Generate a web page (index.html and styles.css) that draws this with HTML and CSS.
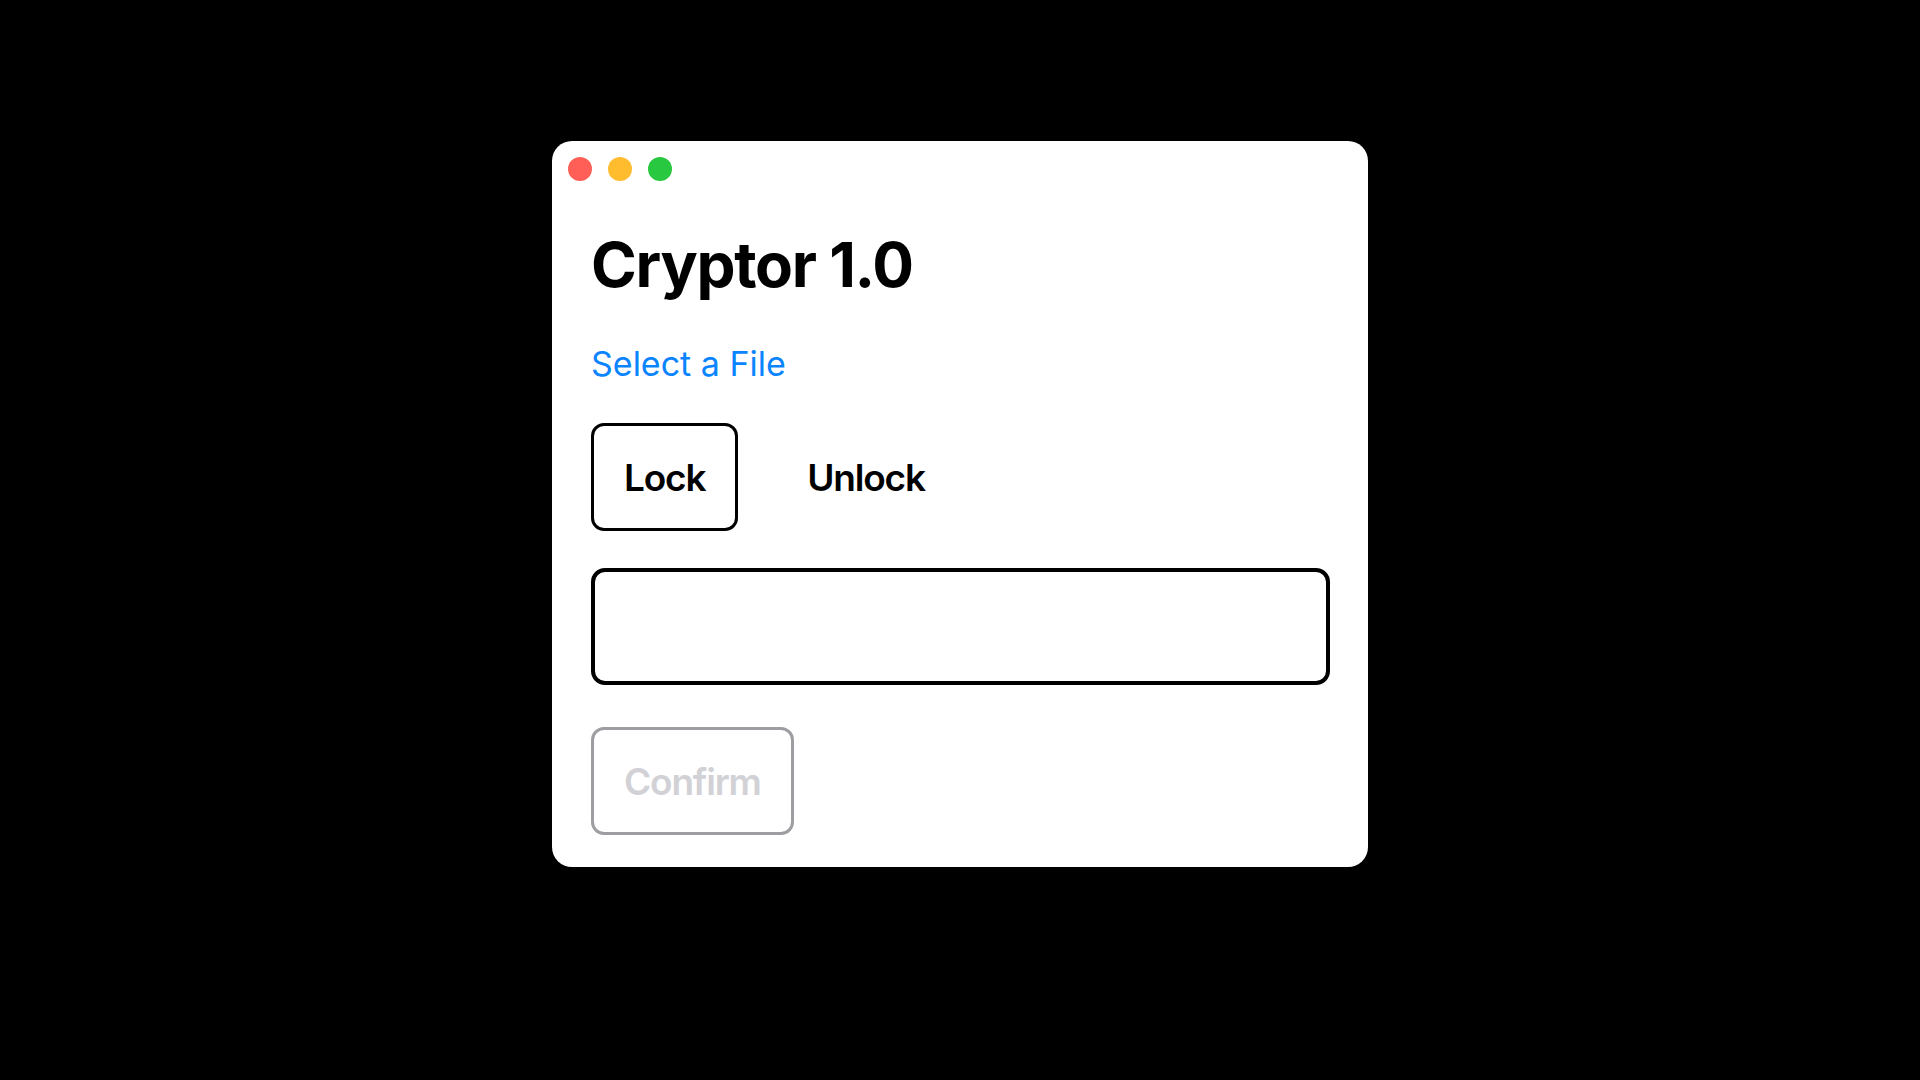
FILE: index.html
```html
<!DOCTYPE html>
<html lang="en">
<head>
<meta charset="utf-8">
<title>Cryptor 1.0</title>
<link rel="stylesheet" href="styles.css">
</head>
<body>
  <div class="window">
    <div class="titlebar">
      <span class="light red"></span>
      <span class="light yellow"></span>
      <span class="light green"></span>
    </div>
    <div class="content">
      <h1 class="title">Cryptor 1.0</h1>
      <a class="select-link" href="#">Select a File</a>
      <div class="modes">
        <button class="mode active">Lock</button>
        <button class="mode">Unlock</button>
      </div>
      <input class="key-input" type="text">
      <div class="actions">
        <button class="confirm" disabled>Confirm</button>
      </div>
    </div>
  </div>
</body>
</html>
```
FILE: styles.css
```css
html, body {
  margin: 0;
  padding: 0;
  background: #000;
  height: 100%;
}
body {
  font-family: Inter, "Noto Sans", "Liberation Sans", sans-serif;
  padding-top: 141px;
  box-sizing: border-box;
}
.window {
  width: 816px;
  margin: 0 auto;
  background: #fff;
  border-radius: 20px;
  box-sizing: border-box;
  padding: 16px 38px 32px 39px;
}
.titlebar {
  display: flex;
  gap: 16px;
  margin-left: -23px;
  height: 24px;
}
.light {
  width: 24px;
  height: 24px;
  border-radius: 50%;
  display: block;
}
.red { background: #ff5f57; }
.yellow { background: #febc2e; }
.green { background: #28c840; }
.content {
  display: flex;
  flex-direction: column;
  align-items: flex-start;
}
.title {
  margin: 53px 0 0 0;
  font-size: 62px;
  line-height: 62px;
  font-weight: 700;
  color: #000;
  letter-spacing: -1.3px;
}
.select-link {
  margin-top: 51px;
  font-size: 34px;
  line-height: 34px;
  color: #0a84ff;
  text-decoration: none;
}
.modes {
  margin-top: 42px;
  display: flex;
  gap: 36px;
}
.mode {
  height: 108px;
  padding: 0 30px;
  border: 3px solid transparent;
  border-radius: 13px;
  background: #fff;
  font-family: inherit;
  font-size: 37px;
  font-weight: 600;
  color: #000;
  letter-spacing: -1.2px;
}
.mode.active {
  border-color: #000;
}
.key-input {
  margin-top: 37px;
  width: 100%;
  height: 117px;
  box-sizing: border-box;
  border: 4px solid #000;
  border-radius: 14px;
  outline: none;
  background: #fff;
}
.actions {
  margin-top: 42px;
  display: flex;
}
.confirm {
  height: 108px;
  padding: 0 30px;
  border: 3px solid #9e9ea2;
  border-radius: 13px;
  background: #fff;
  font-family: inherit;
  font-size: 37px;
  font-weight: 600;
  color: #d1d1d6;
  letter-spacing: -1.2px;
}
```
